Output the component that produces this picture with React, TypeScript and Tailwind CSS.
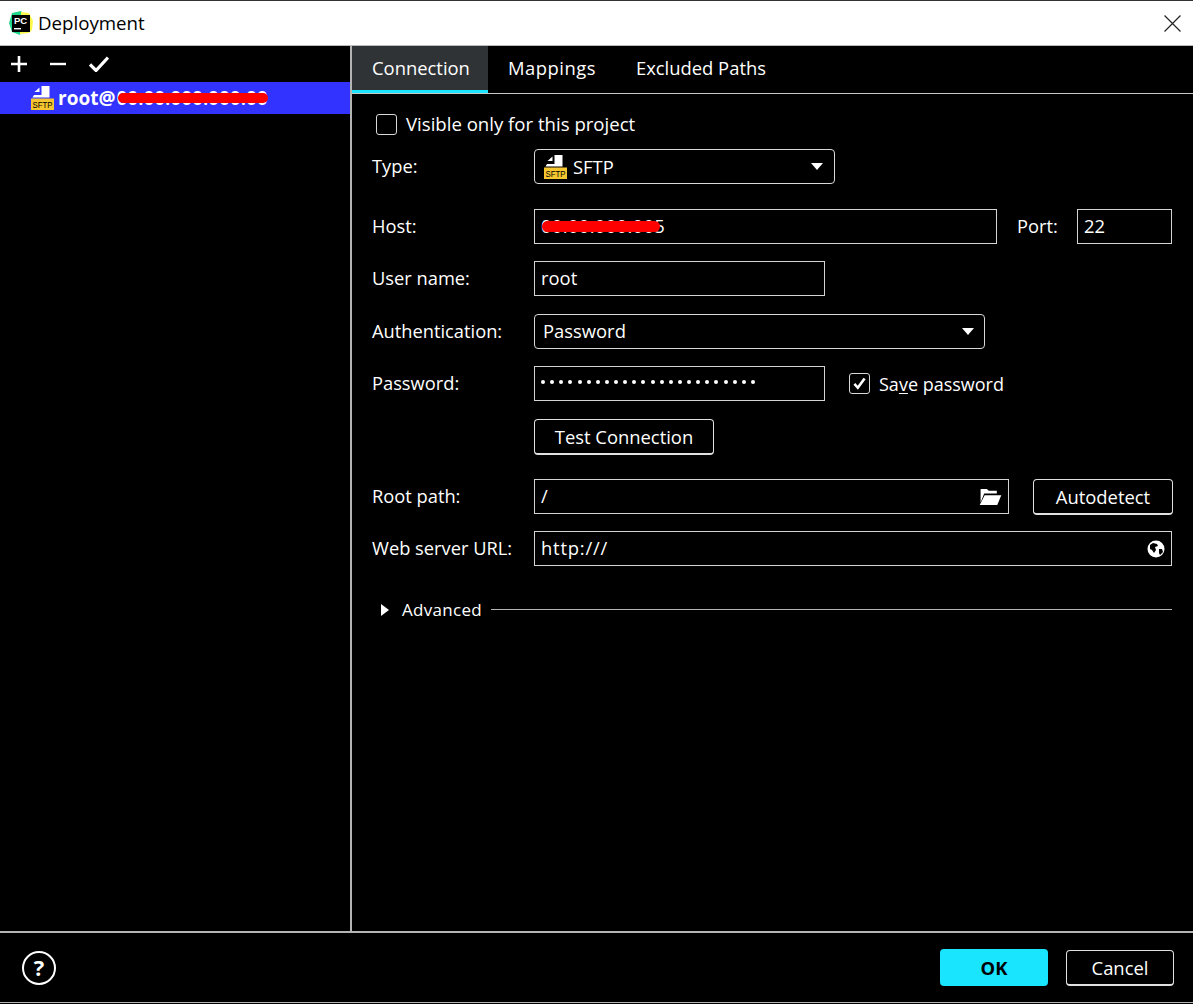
import React from 'react';

const font = { fontFamily: '"Open Sans", "Noto Sans", sans-serif' };

const SftpIcon = ({ className }: { className?: string }) => (
  <svg viewBox="0 0 23 24" className={`${className} overflow-visible`}>
    <path d="M8.5 1.5V6H3.5z" fill="#fff" />
    <path d="M10.5 0H18.5V11.5H1.5L3 9H10.5z" fill="#fff" />
    <rect x="0" y="12.5" width="23" height="11.5" fill="#f5c62f" />
    <text x="11.5" y="21.5" textAnchor="middle" fontSize="9.5" textLength="20" lengthAdjust="spacingAndGlyphs" fontFamily="Liberation Sans, sans-serif" fill="#000">SFTP</text>
  </svg>
);

const Logo = () => (
  <svg viewBox="0 0 24 24" className="w-[24px] h-[24px]">
    <path d="M3 2l9-2 3 4-4 20-8-3-3-9z" fill="#21d789" />
    <path d="M12 1l8 1 4 8-1 9-3 3-9 1z" fill="#fcf84a" />
    <rect x="3" y="4" width="18" height="17" fill="#000" />
    <text x="5" y="13" fontSize="9.5" fontWeight="700" fontFamily="Liberation Sans, sans-serif" fill="#fff">PC</text>
    <rect x="5" y="17" width="7" height="1.4" fill="#fff" />
  </svg>
);

const Label = ({ children, className = 'w-[162px]' }: { children: React.ReactNode; className?: string }) => (
  <div className={`${className} shrink-0 pb-[2px] text-[18.3px] text-white`}>{children}</div>
);

const Field = ({ className, children }: { className: string; children?: React.ReactNode }) => (
  <div className={`${className} h-[35px] border border-[#d4d4d4] pl-[6px] pr-[6px] pb-[2px] flex items-center justify-between text-[18.4px] text-white`}>
    {children}
  </div>
);

const Caret = () => <div className="w-0 h-0 border-x-[6.5px] border-x-transparent border-t-[7px] border-t-white" />;

const Button = ({ className, children }: { className: string; children: React.ReactNode }) => (
  <div className={`${className} h-[36px] rounded-[4px] border border-[#e0e0e0] border-b-2 flex items-center justify-center text-[18.4px] text-white`}>
    {children}
  </div>
);

const Check = ({ checked, className }: { checked?: boolean; className: string }) => (
  <div className={`${className} w-[21px] h-[21px] rounded-[3px] border border-[#d8d8d8] flex items-center justify-center`}>
    {checked && (
      <svg viewBox="0 0 20 20" className="w-[17px] h-[17px]">
        <path d="M4 10.5l4 4.5 8-11" fill="none" stroke="#fff" strokeWidth="3" />
      </svg>
    )}
  </div>
);

export default function App() {
  return (
    <div className="w-[1193px] h-[1004px] bg-black flex flex-col overflow-hidden" style={font}>
      {/* Title bar */}
      <div className="h-[46px] shrink-0 bg-white border-t border-t-[#333] border-b border-b-[#bbb] flex items-center pl-[9px] pr-[12px]">
        <Logo />
        <span className="ml-[5px] text-[18.7px] text-black">Deployment</span>
        <svg viewBox="0 0 16 16" className="ml-auto w-[17px] h-[17px]">
          <path d="M0.5 0.5l15 15M15.5 0.5l-15 15" stroke="#222" strokeWidth="1.1" />
        </svg>
      </div>

      <div className="flex-1 flex min-h-0">
        {/* Left list */}
        <div className="w-[352px] shrink-0 border-r-2 border-r-[#b4b4b4]">
          <div className="h-[36px] flex items-center pl-[11px] gap-[23px]">
            <svg viewBox="0 0 16 16" className="w-[16px] h-[16px]">
              <path d="M8 0v16M0 8h16" stroke="#fff" strokeWidth="2.6" />
            </svg>
            <svg viewBox="0 0 16 16" className="w-[16px] h-[16px]">
              <path d="M0 8h16" stroke="#fff" strokeWidth="2.4" />
            </svg>
            <svg viewBox="0 0 20 16" className="w-[20px] h-[16px]">
              <path d="M1 8.5l6 6L19 1.5" fill="none" stroke="#fff" strokeWidth="3.2" />
            </svg>
          </div>
          <div className="h-[32px] bg-[#3333ff] flex items-center pl-[31px] relative">
            <SftpIcon className="w-[23px] h-[24px]" />
            <span className="ml-[4px] text-[19px] font-bold text-white">root@</span>
            <span className="ml-[1px] text-[19px] font-semibold text-white whitespace-nowrap">00.00.000.000.00</span>
            <div className="absolute left-[118px] top-[11px] w-[150px] h-[10px] rounded-full bg-[#ff0000]" />
          </div>
        </div>

        {/* Right content */}
        <div className="flex-1 min-w-0 flex flex-col">
          <div className="h-[48px] shrink-0 flex border-b border-b-[#c8c8c8] text-[18.4px] text-white">
            <div className="w-[136px] pl-[20px] h-[47px] bg-[#2f3336] border-b-[3px] border-b-[#1ae5ff] flex items-center">Connection</div>
            <div className="px-[20px] pb-[4px] flex items-center tracking-[0.5px]">Mappings</div>
            <div className="px-[20px] pb-[4px] flex items-center">Excluded Paths</div>
          </div>

          <div className="pl-[20px] pr-[21px] flex flex-col">
            <div className="mt-[19px] h-[22px] flex items-center text-[18.6px] text-white">
              <Check className="ml-[4px]" />
              <span className="ml-[9px]">Visible only for this project</span>
            </div>

            <div className="mt-[14px] flex items-center">
              <Label>Type:</Label>
              <div className="w-[301px] h-[35px] rounded-[4px] border border-[#d8d8d8] flex items-center pl-[9px] pr-[11px] text-[18.4px] text-white">
                <SftpIcon className="w-[23px] h-[24px]" />
                <span className="ml-[6px]">SFTP</span>
                <span className="ml-auto"><Caret /></span>
              </div>
            </div>

            <div className="mt-[25px] flex items-center">
              <Label>Host:</Label>
              <Field className="w-[463px] relative justify-start">
                <span className="tracking-[0.35px]">00.00.000.005</span>
                <div className="absolute left-[7px] top-[11px] w-[118px] h-[11px] rounded-full bg-[#ff0000]" />
              </Field>
              <Label className="ml-[20px] w-[60px]">Port:</Label>
              <Field className="w-[95px]">22</Field>
            </div>

            <div className="mt-[17px] flex items-center">
              <Label>User name:</Label>
              <Field className="w-[291px]">root</Field>
            </div>

            <div className="mt-[18px] flex items-center">
              <Label>Authentication:</Label>
              <div className="w-[451px] h-[35px] rounded-[4px] border border-[#d8d8d8] flex items-center pl-[8px] pr-[10px] pb-[2px] text-[18.4px] text-white">
                <span>Password</span>
                <span className="ml-auto mt-[2px]"><Caret /></span>
              </div>
            </div>

            <div className="mt-[17px] flex items-center">
              <Label>Password:</Label>
              <Field className="w-[291px] justify-start">
                <span className="flex gap-[5.13px] -mt-[2px]">
                  {Array.from({ length: 24 }).map((_, i) => (
                    <span key={i} className="w-[4px] h-[4px] rounded-full bg-white" />
                  ))}
                </span>
              </Field>
              <Check checked className="ml-[24px]" />
              <span className="ml-[9px] pt-[2px] text-[18px] text-white">
                Sa<span className="underline underline-offset-2">v</span>e password
              </span>
            </div>

            <div className="mt-[18px] pl-[162px]">
              <Button className="w-[180px]">Test Connection</Button>
            </div>

            <div className="mt-[24px] flex items-start">
              <Label className="w-[162px] leading-[33px]">Root path:</Label>
              <Field className="w-[475px] shrink-0">
                <span>/</span>
                <svg viewBox="0 0 24 20" className="w-[23px] h-[18px] mt-[2px]">
                  <path d="M1 1h7l2 2h9v3H5L1 16z" fill="#fff" />
                  <path d="M5.5 8H24l-4.5 11H0z" fill="#fff" />
                </svg>
              </Field>
              <Button className="ml-[24px] w-[140px] shrink-0">Autodetect</Button>
            </div>

            <div className="mt-[16px] flex items-center">
              <Label>Web server URL:</Label>
              <Field className="flex-1">
                <span className="tracking-[0.8px]">http:///</span>
                <svg viewBox="0 0 18 18" className="w-[18px] h-[18px] mt-[2px]">
                  <circle cx="9" cy="9" r="8.5" fill="#fff" />
                  <path d="M3 5l3-2 4 1 1 2-3 1 1 3-2 3-2-3-2-1zM12 9l3 0 1 3-3 3-1-2z" fill="#000" />
                </svg>
              </Field>
            </div>

            <div className="mt-[31px] flex items-center">
              <div className="ml-[9px] w-0 h-0 border-y-[6.5px] border-y-transparent border-l-[8px] border-l-white" />
              <span className="ml-[13px] text-[17px] text-white tracking-[0.3px]">Advanced</span>
              <div className="ml-[9px] flex-1 h-px bg-[#b4b4b4]" />
            </div>
          </div>
        </div>
      </div>

      {/* Footer */}
      <div className="h-[72px] shrink-0 border-t-2 border-t-[#b4b4b4] border-b border-b-[#b4b4b4] flex items-center pl-[22px] pr-[19px]">
        <div className="w-[34px] h-[34px] rounded-full border-2 border-white flex items-center justify-center text-[22px] font-bold text-white">?</div>
        <div className="ml-auto w-[108px] h-[37px] rounded-[4px] bg-[#1ae5ff] flex items-center justify-center text-[18.4px] font-bold text-black">OK</div>
        <Button className="ml-[18px] w-[108px] pt-[2px]">Cancel</Button>
      </div>
      <div className="h-[1px] shrink-0 bg-black" />
    </div>
  );
}
